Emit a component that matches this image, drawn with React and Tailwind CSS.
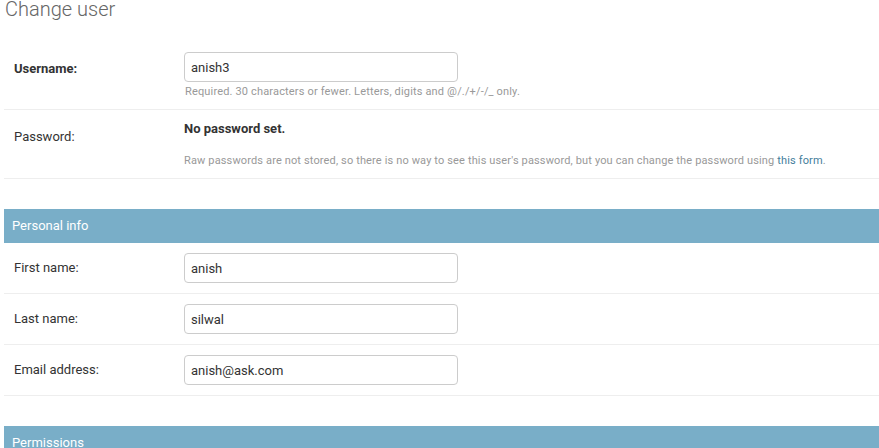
import React from "react";

function Field({ label, value, required }) {
  return (
    <div className="flex items-start border-b border-[#eee] px-[10px] py-[10px]">
      <label
        className={
          "w-[170px] shrink-0 pt-[7px] pr-[10px] text-[13px] leading-[16px] text-[#333] " +
          (required ? "font-bold" : "")
        }
      >
        {label}
      </label>
      <input
        readOnly
        value={value}
        className="w-[274px] h-[30px] rounded-[4px] border border-[#ccc] bg-white px-[6px] text-[13px] leading-[18px] text-[#333] outline-none"
      />
    </div>
  );
}

export default function App() {
  return (
    <div className="font-['Roboto','Liberation_Sans',sans-serif] bg-white min-h-[448px] pl-[4px] overflow-hidden">
      <h1 className="mb-[24px] pl-[1px] text-[20px] leading-[18px] font-light text-[#666]">
        Change user
      </h1>

      <fieldset className="mb-[30px]">
        <div className="flex items-start border-b border-[#eee] px-[10px] py-[10px]">
          <label className="w-[170px] shrink-0 pt-[9px] pr-[10px] text-[13px] leading-[16px] font-bold text-[#333]">
            Username:
          </label>
          <div>
            <input
              readOnly
              value="anish3"
              className="w-[274px] h-[30px] rounded-[4px] border border-[#ccc] bg-white px-[6px] text-[13px] leading-[18px] text-[#333] outline-none"
            />
            <p className="mt-[3px] pl-[1px] text-[11px] leading-[14px] tracking-[0.16px] text-[#999]">
              Required. 30 characters or fewer. Letters, digits and @/./+/-/_ only.
            </p>
          </div>
        </div>

        <div className="flex items-start border-b border-[#eee] px-[10px] py-[10px]">
          <label className="w-[170px] shrink-0 pt-[9px] pr-[10px] text-[13px] leading-[16px] text-[#333]">
            Password:
          </label>
          <div>
            <div className="text-[13px] leading-[18px] font-bold text-[#333]">No password set.</div>
            <p className="mt-[16px] text-[11px] leading-[14px] tracking-[0.14px] text-[#999]">
              Raw passwords are not stored, so there is no way to see this user's password, but you can change the password using{" "}
              <a href="#" className="text-[#447e9b]">this form</a>.
            </p>
          </div>
        </div>
      </fieldset>

      <fieldset className="mb-[30px]">
        <h2 className="bg-[#79aec8] px-[8px] py-[8px] text-[13px] leading-[18px] text-white">Personal info</h2>
        <Field label="First name:" value="anish" />
        <Field label="Last name:" value="silwal" />
        <Field label="Email address:" value="anish@ask.com" />
      </fieldset>

      <fieldset>
        <h2 className="bg-[#79aec8] px-[8px] py-[8px] text-[13px] leading-[18px] text-white">Permissions</h2>
      </fieldset>
    </div>
  );
}
